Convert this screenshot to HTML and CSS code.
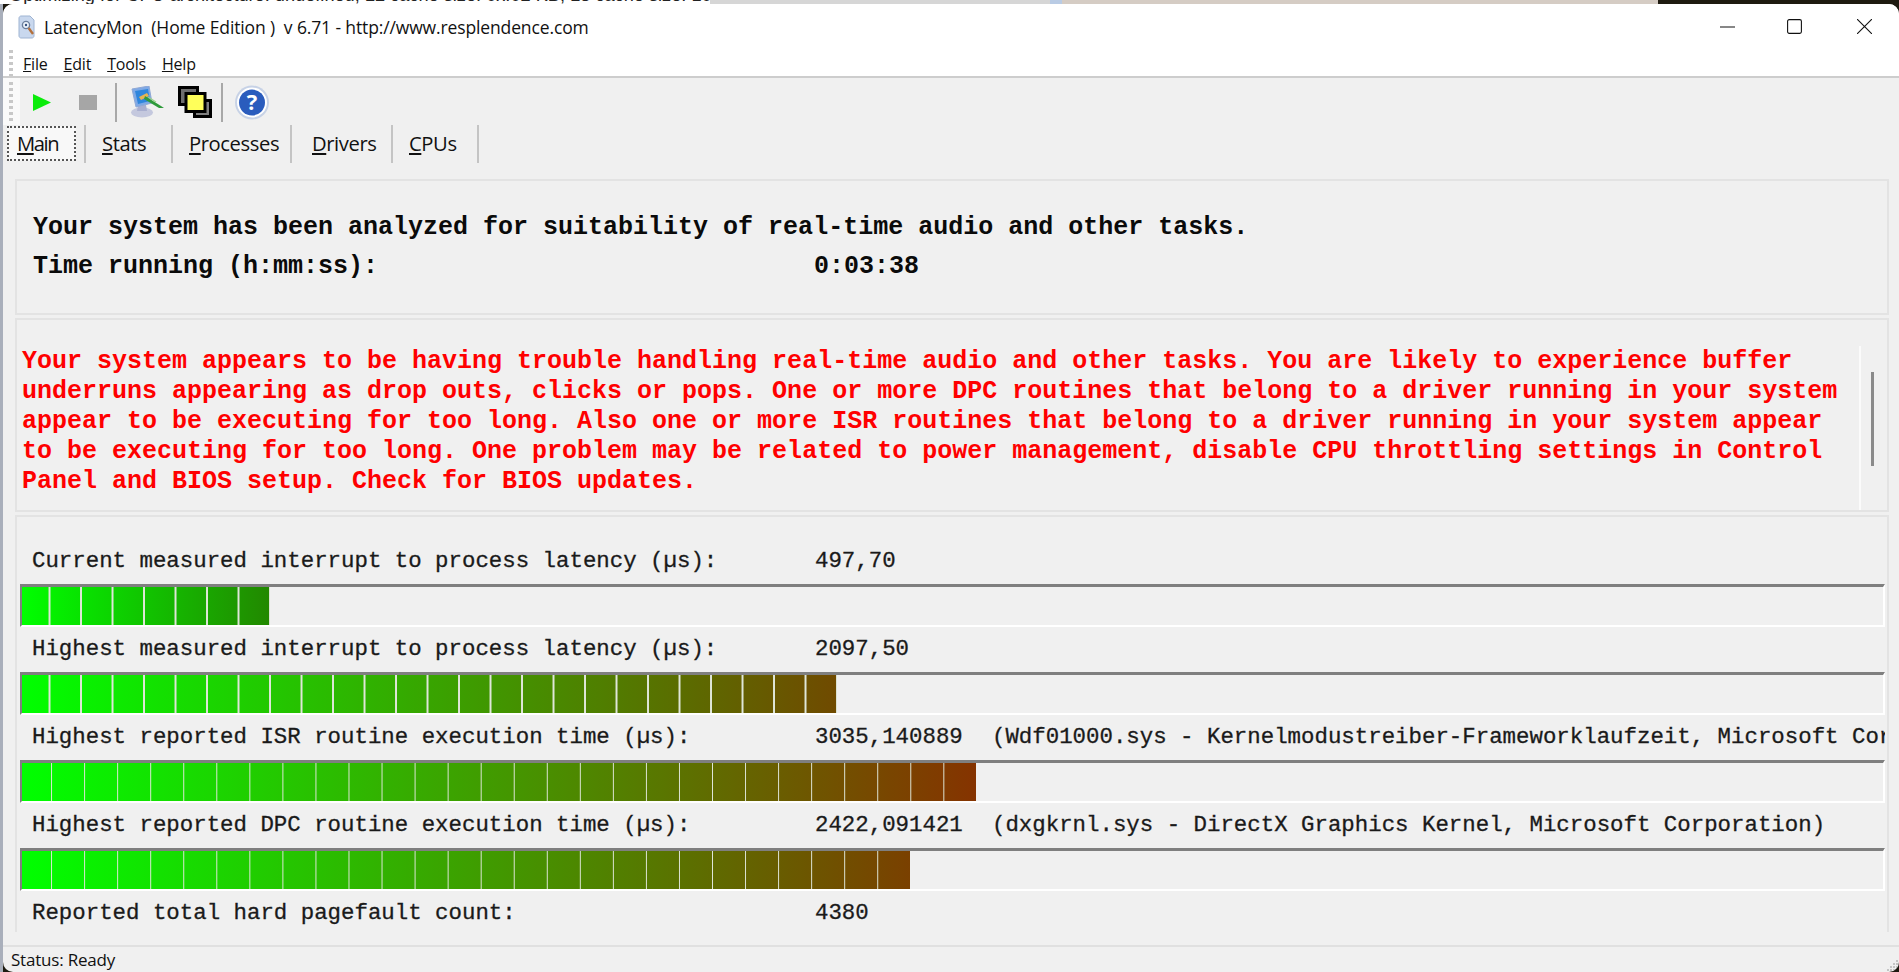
FILE: index.html
```html
<!DOCTYPE html>
<html lang="en">
<head>
<meta charset="utf-8">
<title>LatencyMon</title>
<link rel="stylesheet" href="styles.css">
</head>
<body>
<div class="desktop">
  <div class="desk-log"><span class="desk-text">Optimizing for CPU architecture: undefined, L2 cache size: 0x.02 KB, L3 cache size: 10 MB</span></div>
  <div class="desk-app"></div>
  <div class="desk-dark"></div>
</div>
<div class="window">
  <header class="titlebar">
    <svg class="app-icon" width="20" height="24" viewBox="0 0 18 24">
      <path d="M3 1h9l4 4v16c0 1-1 2-2 2H3c-1 0-2-1-2-2V3c0-1 1-2 2-2z" fill="#c9d8ee" stroke="#9fb4d2"/>
      <circle cx="8" cy="10" r="3.6" fill="#eef3fa" stroke="#6c7f9c" stroke-width="1.4"/>
      <circle cx="8" cy="10" r="1.2" fill="#33507f"/>
      <path d="M10.6 13l4.4 6" stroke="#b4703c" stroke-width="2.4"/>
    </svg>
    <span class="title-text">LatencyMon&nbsp; (Home Edition )&nbsp; v 6.71 - http://www.resplendence.com</span>
    <div class="win-controls">
      <svg class="ctl-min" width="15" height="15" viewBox="0 0 15 15"><path d="M0 8h15" stroke="#111" stroke-width="1.1"/></svg>
      <svg class="ctl-max" width="15" height="15" viewBox="0 0 15 15"><rect x=".6" y=".6" width="13.8" height="13.8" rx="1.6" fill="none" stroke="#111" stroke-width="1.1"/></svg>
      <svg width="15" height="15" viewBox="0 0 15 15"><path d="M0 0l15 15M15 0L0 15" stroke="#111" stroke-width="1.1"/></svg>
    </div>
  </header>
  <nav class="menubar">
    <span class="grip"></span>
    <span class="menu-item"><u>F</u>ile</span>
    <span class="menu-item"><u>E</u>dit</span>
    <span class="menu-item"><u>T</u>ools</span>
    <span class="menu-item"><u>H</u>elp</span>
  </nav>
  <div class="toolbar">
    <span class="grip"></span>
    <svg class="tool tool-play" width="18" height="17" viewBox="0 0 18 17"><path d="M0 0l18 8.5L0 17z" fill="#0bec0b"/></svg>
    <span class="tool tool-stop"></span>
    <span class="tool-sep sep-a"></span>
    <svg class="tool tool-monitor" width="36" height="32" viewBox="0 0 36 32">
      <ellipse cx="13" cy="26.5" rx="11" ry="5" fill="#c4c8de"/>
      <path d="M9 19h8l1 6H8z" fill="#a9afd0"/>
      <path d="M3 3l17-3 3 17-16 4z" fill="#7fa9e6" stroke="#8fa8d4"/>
      <path d="M6 5l13-2 2 12-12 3z" fill="#2f86dc"/>
      <path d="M10 11l8-4 2 3-8 4z" fill="#e6b450"/>
      <path d="M16 10l16 10 3 2-5 0-15-9z" fill="#2e9a3a"/>
      <path d="M19 11l8 5" stroke="#9ad08a" stroke-width="1.4"/>
    </svg>
    <svg class="tool tool-cascade" width="34" height="32" viewBox="0 0 34 32">
      <rect x="1.5" y="1.5" width="18" height="17" fill="#6e6e6e" stroke="#000" stroke-width="3"/>
      <rect x="16.5" y="14.5" width="16" height="16" fill="#808080" stroke="#000" stroke-width="3"/>
      <rect x="8" y="7.5" width="19" height="18" fill="#ffff5a" stroke="#000" stroke-width="3"/>
    </svg>
    <span class="tool-sep sep-b"></span>
    <svg class="tool tool-help" width="34" height="35" viewBox="0 0 34 35">
      <circle cx="17" cy="17.5" r="17" fill="#c7d2e6"/>
      <circle cx="17" cy="17.5" r="15" fill="#fff"/>
      <circle cx="17" cy="17.5" r="13" fill="#2a5cbd"/>
      <text x="17" y="25" text-anchor="middle" class="help-mark">?</text>
    </svg>
  </div>
  <div class="tabs">
    <span class="tab tab-main is-active"><span class="tab-label"><u>M</u>ain</span></span>
    <span class="tab tab-stats"><span class="tab-label"><u>S</u>tats</span></span>
    <span class="tab tab-proc"><span class="tab-label"><u>P</u>rocesses</span></span>
    <span class="tab tab-drv"><span class="tab-label"><u>D</u>rivers</span></span>
    <span class="tab tab-cpu"><span class="tab-label"><u>C</u>PUs</span></span>
  </div>
  <main class="content">
    <section class="panel panel-summary">
      <p class="summary-line">Your system has been analyzed for suitability of real-time audio and other tasks.</p>
      <p class="summary-line summary-time"><span>Time running (h:mm:ss):</span><span>0:03:38</span></p>
    </section>
    <section class="panel panel-verdict">
      <p class="verdict">Your system appears to be having trouble handling real-time audio and other tasks. You are likely to experience buffer underruns appearing as drop outs, clicks or pops. One or more DPC routines that belong to a driver running in your system appear to be executing for too long. Also one or more ISR routines that belong to a driver running in your system appear to be executing for too long. One problem may be related to power management, disable CPU throttling settings in Control Panel and BIOS setup. Check for BIOS updates.</p>
      <div class="scroll-track"><span class="scroll-thumb"></span></div>
    </section>
    <section class="panel panel-metrics">
      <div class="metric">
        <div class="metric-text"><span>Current measured interrupt to process latency (µs):</span><span>497,70</span><span></span></div>
        <div class="bar"><div class="fill pitch-a" style="width:248px;--end:#228800"></div></div>
      </div>
      <div class="metric">
        <div class="metric-text"><span>Highest measured interrupt to process latency (µs):</span><span>2097,50</span><span></span></div>
        <div class="bar"><div class="fill pitch-a" style="width:815px;--end:#704a00"></div></div>
      </div>
      <div class="metric">
        <div class="metric-text"><span>Highest reported ISR routine execution time (µs):</span><span>3035,140889</span><span>(Wdf01000.sys - Kernelmodustreiber-Frameworklaufzeit, Microsoft Corporation)</span></div>
        <div class="bar"><div class="fill pitch-b" style="width:953.5px;--end:#853300"></div></div>
      </div>
      <div class="metric">
        <div class="metric-text"><span>Highest reported DPC routine execution time (µs):</span><span>2422,091421</span><span>(dxgkrnl.sys - DirectX Graphics Kernel, Microsoft Corporation)</span></div>
        <div class="bar"><div class="fill pitch-b" style="width:887.5px;--end:#7a4000"></div></div>
      </div>
      <div class="metric">
        <div class="metric-text"><span>Reported total hard pagefault count:</span><span>4380</span><span></span></div>
      </div>
    </section>
  </main>
  <footer class="statusbar">
    <span>Status: Ready</span>
    <svg class="resize" width="14" height="14" viewBox="0 0 14 14"><path d="M11 2h2v2h-2zM8 5h2v2H8zM11 5h2v2h-2zM5 8h2v2H5zM8 8h2v2H8zM11 8h2v2h-2zM2 11h2v2H2zM5 11h2v2H5zM8 11h2v2H8zM11 11h2v2h-2z" fill="#c4c4c4"/></svg>
  </footer>
</div>
</body>
</html>
```
FILE: styles.css
```css
* { box-sizing: border-box; }
html, body { margin: 0; height: 972px; overflow: hidden; }
body {
  width: 1899px;
  background: linear-gradient(90deg, #a9afbb 0 3px, #1e1a10 3px);
  font-family: "Open Sans", "Noto Sans", sans-serif;
  color: #111;
  display: flex;
  flex-direction: column;
}
p { margin: 0; }

.desktop { height: 4px; display: flex; flex: none; overflow: hidden; }
.desk-log { width: 710px; background: #fff; position: relative; overflow: hidden; }
.desk-text {
  position: absolute; left: 9px; top: -14px;
  font: 18.2px/18px "Liberation Sans", sans-serif; color: #222; white-space: nowrap;
}
.desk-app { width: 948px; background: linear-gradient(90deg, #d6d6d6 0 340px, #b9cbe4 340px 352px, #d5ccc4 352px); }
.desk-dark { flex: 1; background: #1e1a10; }

.window {
  margin-left: 3px;
  height: 968px;
  flex: none;
  background: #f0f0f0;
  border-radius: 10px;
  display: flex;
  flex-direction: column;
  overflow: hidden;
}

.titlebar {
  height: 40px;
  flex: none;
  background: #fff;
  display: flex;
  align-items: center;
  padding-left: 14px;
  gap: 7px;
}
.title-text { font-size: 17.5px; letter-spacing: -.13px; white-space: nowrap; margin-top: 5px; }
.app-icon { margin-top: 5px; }
.win-controls { margin-left: auto; display: flex; padding-right: 27px; margin-top: 5px; }
.ctl-min { margin-right: 52px; }
.ctl-max { margin-right: 55px; }

.grip {
  width: 4px;
  background: repeating-linear-gradient(180deg, #c8c8c8 0 3px, transparent 3px 6px);
  flex: none;
}
.menubar {
  height: 34px;
  flex: none;
  background: #fff;
  border-bottom: 2px solid #cdcdcd;
  display: flex;
  align-items: stretch;
  padding-left: 6px;
  font-size: 16px;
  letter-spacing: -.2px;
}
.menubar .grip { margin: 6px 10px 0 0; }
.menu-item { align-self: center; margin-right: 16px; padding-top: 7px; }

.toolbar {
  height: 47px;
  flex: none;
  display: flex;
  align-items: center;
  padding-left: 6px;
  background: linear-gradient(90deg, #fafafa 0 17px, transparent 17px);
}
.toolbar .grip { height: 41px; margin-top: 2px; }
.tool { flex: none; margin-top: 1px; }
.tool-play { margin-left: 20px; }
.tool-stop { width: 18px; height: 15px; background: #a6a6a6; margin-left: 28px; }
.tool-sep { width: 2px; height: 39px; background: #a8a8a8; flex: none; margin-top: 2px; }
.sep-a { margin-left: 18px; }
.tool-monitor { margin-left: 12px; }
.tool-cascade { margin-left: 13px; }
.sep-b { margin-left: 9px; }
.tool-help { margin-left: 12px; }
.help-mark { font: 700 22px "Open Sans", sans-serif; fill: #fff; }

.tabs {
  height: 38px;
  flex: none;
  display: flex;
  align-items: stretch;
  font-size: 20.2px;
  letter-spacing: -.4px;
}
.tab {
  display: flex;
  align-items: center;
  border-right: 2px solid #c4c4c4;
  flex: none;
  padding-bottom: 2px;
  position: relative;
}
.tab-label { position: relative; }
.tab-main { width: 83px; padding-left: 14px; letter-spacing: -1.4px; }
.tab-stats { width: 87px; padding-left: 16px; }
.tab-proc { width: 119px; padding-left: 16px; }
.tab-drv { width: 101px; padding-left: 20px; }
.tab-cpu { width: 86px; padding-left: 16px; }
.is-active::before {
  content: "";
  position: absolute;
  left: 4px; top: 1px; bottom: 2px; right: 8px;
  border: 2px dotted #555;
  background: #f8f8f8;
}

.content {
  flex: 1;
  min-height: 0;
  padding: 16px 10px 0 12px;
  display: flex;
  flex-direction: column;
  gap: 3px;
}
.panel { border: 2px solid #e3e3e3; flex: none; position: relative; }

.panel-summary {
  height: 136px;
  padding: 27px 0 0 16px;
  font: 700 25px/39px "Liberation Mono", monospace;
  color: #0a0a0a;
}
.summary-time { display: grid; grid-template-columns: 781px 1fr; }

.panel-verdict { height: 194px; padding: 27px 0 0 5px; }
.verdict {
  width: 1825px;
  font: 700 25px/30px "Liberation Mono", monospace;
  color: #ff0000;
}
.scroll-track {
  position: absolute;
  left: 1842px; top: 26px; bottom: 0;
  width: 30px;
  border-left: 2px solid #fbfbfb;
}
.scroll-thumb {
  position: absolute;
  left: 10px; top: 26px;
  width: 3px; height: 94px;
  background: #8a8a8a;
}

.panel-metrics {
  height: 417px;
  padding: 28px 2px 0 3px;
  border-bottom: 0;
  display: flex;
  flex-direction: column;
  gap: 6px;
}
.metric { display: flex; flex-direction: column; gap: 7px; }
.metric-text {
  height: 32px;
  padding-left: 12px;
  display: grid;
  grid-template-columns: 783px 177px 1fr;
  font: 22.4px/32px "Liberation Mono", monospace;
  color: #1a1a1a;
  -webkit-text-stroke: .3px #1a1a1a;
  white-space: nowrap;
  overflow: hidden;
}
.bar {
  height: 43px;
  border-style: solid;
  border-width: 3px 2px 2px 2px;
  border-color: #7f7f7f #fff #fff #7f7f7f;
}
.fill {
  height: 100%;
  background-image:
    linear-gradient(90deg, transparent 0 var(--seg), #dfe6d8 var(--seg)),
    linear-gradient(90deg, #00ff00, var(--end));
  background-size: var(--pitch) 100%, 100% 100%;
  background-position: -3px 0, 0 0;
}
.pitch-a { --pitch: 31.5px; --seg: 30px; }
.pitch-b { --pitch: 33.05px; --seg: 31.6px; }

.statusbar {
  height: 27px;
  flex: none;
  border-top: 2px solid #e0e0e0;
  padding-left: 8px;
  display: flex;
  align-items: center;
  justify-content: space-between;
  font-size: 17px;
  letter-spacing: -.2px;
}
.resize { align-self: flex-end; }
```
